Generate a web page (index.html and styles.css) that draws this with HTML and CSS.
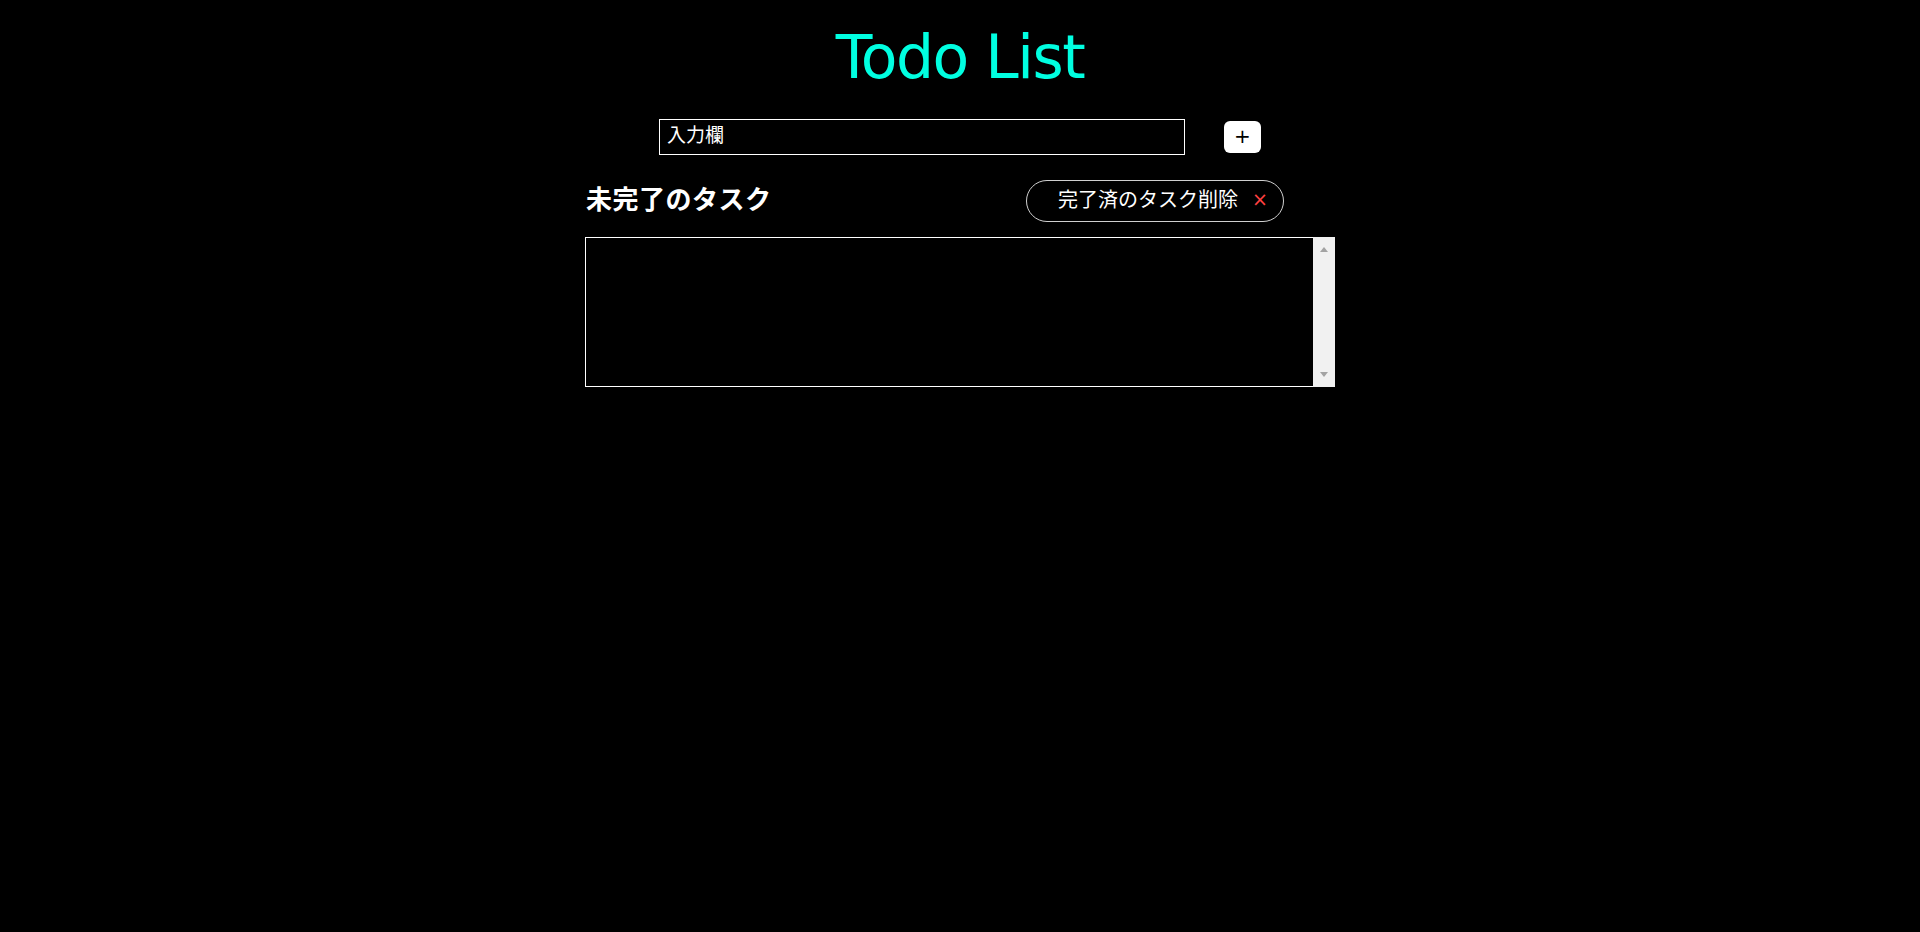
FILE: index.html
```html
<!DOCTYPE html>
<html lang="ja">
<head>
<meta charset="utf-8">
<title>Todo List</title>
<link rel="stylesheet" href="styles.css">
</head>
<body>
<main class="app">
  <h1 class="title">Todo List</h1>
  <div class="add-row">
    <input class="add-input" type="text" placeholder="入力欄">
    <button class="add-btn" type="button">+</button>
  </div>
  <div class="section-head">
    <h2 class="section-title">未完了のタスク</h2>
    <button class="clear-btn" type="button">完了済のタスク削除<span class="clear-x">×</span></button>
  </div>
  <div class="list">
    <ul class="list-area"></ul>
    <div class="scrollbar">
      <span class="arrow arrow-up"></span>
      <span class="arrow arrow-down"></span>
    </div>
  </div>
</main>
</body>
</html>
```
FILE: styles.css
```css
html, body {
  margin: 0;
  padding: 0;
  background: #000;
}
body {
  font-family: "Noto Sans CJK JP", "DejaVu Sans", sans-serif;
  color: #fff;
}
.app {
  width: 750px;
  margin: 0 auto;
  display: flex;
  flex-direction: column;
}
.title {
  margin: 22px 0 0;
  height: 70px;
  line-height: 70px;
  text-align: center;
  font-family: "DejaVu Sans", sans-serif;
  font-weight: 400;
  font-size: 60px;
  letter-spacing: -1.5px;
  color: #00ffe1;
}
.add-row {
  margin-top: 27px;
  display: flex;
  justify-content: center;
  align-items: center;
  gap: 39px;
}
.add-input {
  box-sizing: border-box;
  width: 526px;
  height: 36px;
  border: 1px solid #fff;
  background: #000;
  color: #fff;
  padding: 0 7px 7px;
  font-family: "Noto Sans CJK JP", sans-serif;
  font-size: 19px;
  outline: none;
}
.add-input::placeholder {
  color: #fff;
  opacity: 1;
}
.add-btn {
  box-sizing: border-box;
  width: 37px;
  height: 32px;
  border: none;
  border-radius: 6px;
  background: #fff;
  color: #000;
  font-family: "DejaVu Sans", sans-serif;
  font-size: 20px;
  line-height: 28px;
  padding: 0 0 2px;
}
.section-head {
  margin-top: 25px;
  height: 42px;
  display: flex;
  justify-content: space-between;
  align-items: center;
  padding-right: 51px;
}
.section-title {
  margin: 0 0 0 1px;
  padding-bottom: 7px;
  font-family: "Noto Sans CJK JP", serif;
  font-weight: 700;
  font-size: 26px;
  line-height: 35px;
  letter-spacing: 0.5px;
  color: #fff;
}
.clear-btn {
  box-sizing: border-box;
  height: 42px;
  width: 258px;
  border: 1px solid #d0d0d0;
  border-radius: 21px;
  background: #000;
  color: #fff;
  font-family: "Noto Sans CJK JP", sans-serif;
  font-size: 20px;
  line-height: 28px;
  padding: 0 0 5px 31px;
  display: flex;
  align-items: center;
  white-space: nowrap;
}
.clear-x {
  margin-left: 14px;
  color: #ff4040;
  font-family: "DejaVu Sans", sans-serif;
  font-size: 19px;
}
.list {
  margin-top: 15px;
  height: 150px;
  display: flex;
}
.list-area {
  flex: 1;
  margin: 0;
  padding: 0;
  list-style: none;
  border: 1px solid #fff;
  border-right: none;
}
.scrollbar {
  width: 22px;
  background: #f1f1f1;
  display: flex;
  flex-direction: column;
  justify-content: space-between;
  align-items: center;
  padding: 10px 0;
  box-sizing: border-box;
}
.arrow {
  width: 0;
  height: 0;
  border-left: 4px solid transparent;
  border-right: 4px solid transparent;
}
.arrow-up {
  border-bottom: 5px solid #a3a3a3;
}
.arrow-down {
  border-top: 5px solid #a3a3a3;
}
```
